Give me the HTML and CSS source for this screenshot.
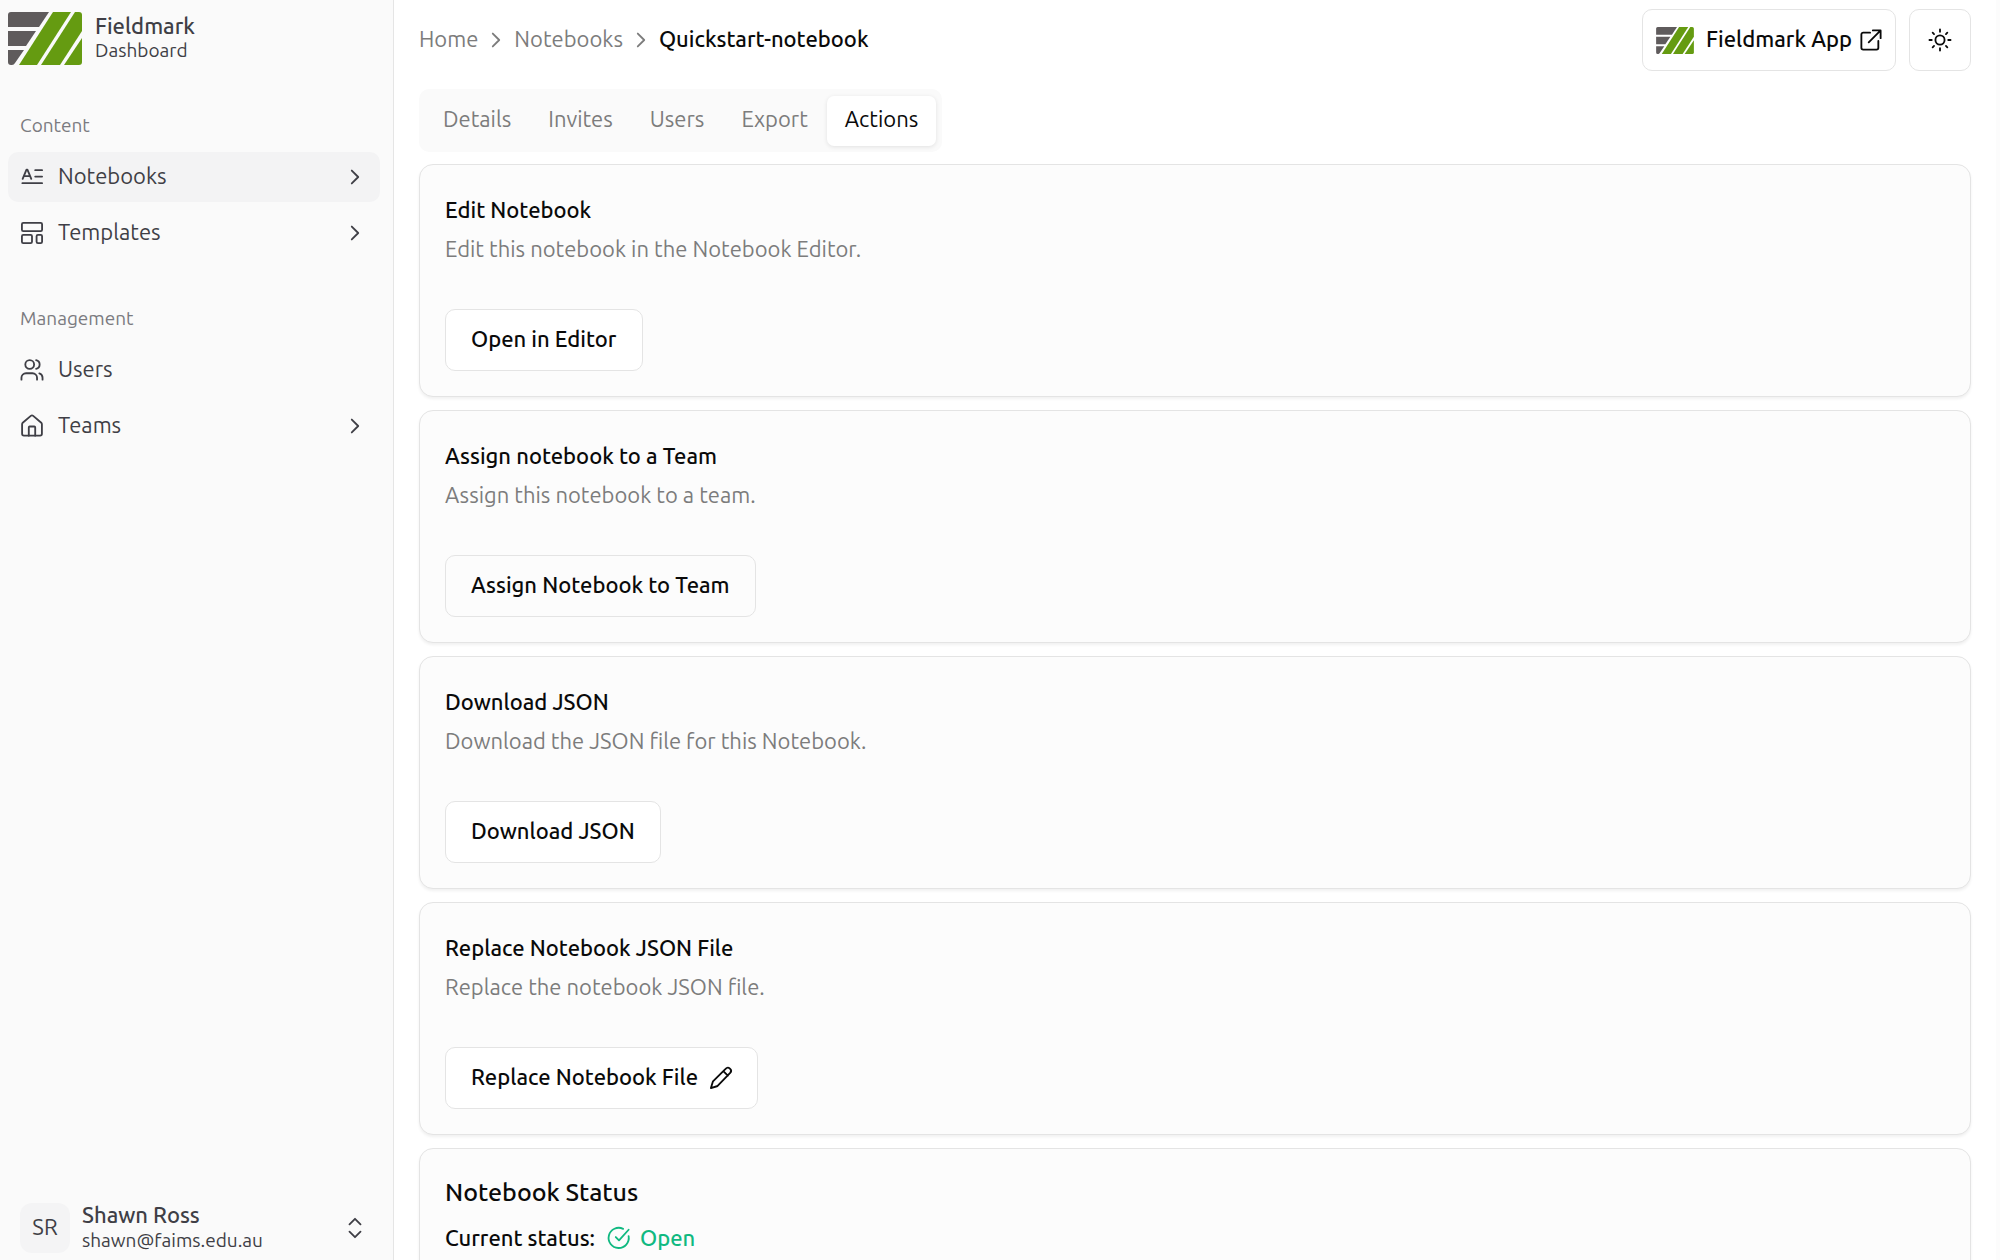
FILE: index.html
```html
<!DOCTYPE html>
<html lang="en">
<head>
<meta charset="utf-8">
<title>Quickstart-notebook - Fieldmark Dashboard</title>
<meta name="viewport" content="width=device-width, initial-scale=1">
<link rel="stylesheet" href="styles.css">
</head>
<body>
<svg class="defs" aria-hidden="true">
  <symbol id="logo" viewBox="0 0 74 53">
    <path fill="#5f5b5c" d="M3 0h38l-10 15H0V3a3 3 0 0 1 3-3z"/>
    <path fill="#5f5b5c" d="M0 19h28l-10 15H0z"/>
    <path fill="#5f5b5c" d="M0 38h16L7 51q-1 2-3 2H3a3 3 0 0 1-3-3z"/>
    <path fill="#659b11" d="M45 0h18L29 53H11z"/>
    <path fill="#659b11" d="M67 0h4a3 3 0 0 1 3 3v16L52 53H33z"/>
    <path fill="#659b11" d="M74 26v24a3 3 0 0 1-3 3H56z"/>
  </symbol>
  <symbol id="chevron" viewBox="0 0 24 24"><path d="m8.500 19 7-7-7-7"/></symbol>
</svg>
<div class="app">
  <aside class="sidebar">
    <a class="brand" href="#">
      <svg class="brand-logo" aria-hidden="true"><use href="#logo"/></svg>
      <span class="stack"><strong class="name">Fieldmark</strong><span class="sub">Dashboard</span></span>
    </a>
    <nav class="group" aria-labelledby="content-label">
      <h2 class="group-label" id="content-label">Content</h2>
      <a class="nav-item active" href="#">
        <svg class="icon" viewBox="0 0 24 24" aria-hidden="true"><path d="M15.500 4.500H23M15.500 11.500H23M1.500 18.700H23M1.800 14 6 4h1l4.200 10M3.500 11h6"/></svg>
        <span class="nav-text">Notebooks</span>
        <svg class="icon" aria-hidden="true"><use href="#chevron"/></svg>
      </a>
      <a class="nav-item" href="#">
        <svg class="icon" viewBox="0 0 24 24" aria-hidden="true"><rect width="22" height="9" x="1" y="1" rx="1.500"/><rect width="11" height="9" x="1" y="14" rx="1.500"/><rect width="6" height="9" x="17" y="14" rx="1.500"/></svg>
        <span class="nav-text">Templates</span>
        <svg class="icon" aria-hidden="true"><use href="#chevron"/></svg>
      </a>
    </nav>
    <nav class="group" aria-labelledby="management-label">
      <h2 class="group-label" id="management-label">Management</h2>
      <a class="nav-item" href="#">
        <svg class="icon" viewBox="0 0 24 24" aria-hidden="true"><path d="M17.500 22.500v-2a5 5 0 0 0-5-5H5.500a5 5 0 0 0-5 5v2"/><circle cx="9.500" cy="6" r="4.800"/><path d="M23.500 22.500v-2a5 5 0 0 0-3.500-4.800M16.500 1.300a4.800 4.800 0 0 1 0 9.400"/></svg>
        <span class="nav-text">Users</span>
      </a>
      <a class="nav-item" href="#">
        <svg class="icon" viewBox="0 0 24 24" aria-hidden="true"><path d="M15.500 22.500v-9a1 1 0 0 0-1-1h-5a1 1 0 0 0-1 1v9"/><path d="M1.200 10a2 2 0 0 1 .7-1.500l8.800-7.500a2 2 0 0 1 2.600 0l8.800 7.500a2 2 0 0 1 .7 1.500v10.500a2 2 0 0 1-2 2H3.200a2 2 0 0 1-2-2z"/></svg>
        <span class="nav-text">Teams</span>
        <svg class="icon" aria-hidden="true"><use href="#chevron"/></svg>
      </a>
    </nav>
    <button class="account" type="button">
      <span class="avatar">SR</span>
      <span class="stack account-text"><strong class="name">Shawn Ross</strong><span class="sub">shawn@faims.edu.au</span></span>
      <svg class="icon" viewBox="0 0 24 24" aria-hidden="true"><path d="m6 16 6 6 6-6M6 8l6-6 6 6"/></svg>
    </button>
  </aside>
  <main class="main">
    <header class="topbar">
      <nav class="crumbs" aria-label="Breadcrumb">
        <a class="crumb" href="#">Home</a>
        <svg class="icon" aria-hidden="true"><use href="#chevron"/></svg>
        <a class="crumb" href="#">Notebooks</a>
        <svg class="icon" aria-hidden="true"><use href="#chevron"/></svg>
        <span class="crumb current" aria-current="page">Quickstart-notebook</span>
      </nav>
      <a class="btn app-link" href="#">
        <svg class="app-logo" aria-hidden="true"><use href="#logo"/></svg>
        <span class="btn-text">Fieldmark App</span>
        <svg class="icon" viewBox="0 0 24 24" aria-hidden="true"><path d="M14 1.500h8.500V10M9.500 14.500l13-13M20 13v7.500a2 2 0 0 1-2 2H3.500a2 2 0 0 1-2-2V6a2 2 0 0 1 2-2H11"/></svg>
      </a>
      <button class="btn theme" type="button" aria-label="Toggle theme">
        <svg class="icon" viewBox="0 0 24 24" aria-hidden="true"><circle cx="12" cy="12" r="5"/><path d="M12 .5v2.500M12 21v2.500M.5 12H3M21 12h2.500M4 4l1.500 1.500M18.500 18.500 20 20M4 20l1.500-1.500M18.500 5.500 20 4"/></svg>
      </button>
    </header>
    <div class="tabs" role="tablist">
      <button class="tab" type="button" role="tab">Details</button>
      <button class="tab" type="button" role="tab">Invites</button>
      <button class="tab" type="button" role="tab">Users</button>
      <button class="tab" type="button" role="tab">Export</button>
      <button class="tab selected" type="button" role="tab" aria-selected="true">Actions</button>
    </div>
    <div class="cards">
      <section class="card">
        <h3 class="card-title">Edit Notebook</h3>
        <p class="card-desc">Edit this notebook in the Notebook Editor.</p>
        <button class="btn" type="button"><span class="btn-text">Open in Editor</span></button>
      </section>
      <section class="card">
        <h3 class="card-title">Assign notebook to a Team</h3>
        <p class="card-desc">Assign this notebook to a team.</p>
        <button class="btn plain" type="button"><span class="btn-text">Assign Notebook to Team</span></button>
      </section>
      <section class="card">
        <h3 class="card-title">Download JSON</h3>
        <p class="card-desc">Download the JSON file for this Notebook.</p>
        <button class="btn" type="button"><span class="btn-text">Download JSON</span></button>
      </section>
      <section class="card">
        <h3 class="card-title">Replace Notebook JSON File</h3>
        <p class="card-desc">Replace the notebook JSON file.</p>
        <button class="btn" type="button">
          <span class="btn-text">Replace Notebook File</span>
          <svg class="icon" viewBox="0 0 24 24" aria-hidden="true"><path d="M22 6.500a3 3 0 0 0-5-4.500L3.500 15.500a2 2 0 0 0-.5.800L1 23l6.500-2a2 2 0 0 0 .8-.5zM14.500 4.500l5 5"/></svg>
        </button>
      </section>
      <section class="card">
        <h3 class="status-title">Notebook Status</h3>
        <p class="status">Current status:
          <span class="open"><svg class="icon" viewBox="0 0 24 24" aria-hidden="true"><path d="M22.500 10a11 11 0 1 1-6-8M8.500 11l3.500 3.500L22.500 3"/></svg>Open</span>
        </p>
      </section>
    </div>
  </main>
</div>
</body>
</html>
```

FILE: styles.css
```css
* { box-sizing: border-box; }
body {
  margin: 0;
  background: #fff;
  color: #0a0a0a;
  font: 400 22px/30px Ubuntu, "Noto Sans", "Open Sans", sans-serif;
}
h2, h3, p { margin: 0; font-weight: 400; }
a { color: inherit; text-decoration: none; }
button { font: inherit; color: inherit; cursor: pointer; }
.defs { position: absolute; width: 0; height: 0; }
.icon {
  width: 22px;
  height: 22px;
  flex: none;
  overflow: visible;
  fill: none;
  stroke: currentColor;
  stroke-width: 2;
  stroke-linecap: round;
  stroke-linejoin: round;
}

.app { display: flex; height: 100vh; overflow: hidden; }

/* Sidebar */
.sidebar {
  flex: none;
  width: 394px;
  display: flex;
  flex-direction: column;
  padding: 11px 13px 0 8px;
  background: #fafafa;
  border-right: 1px solid #e5e5e5;
  color: #3f3f46;
}
.brand { display: flex; align-items: center; gap: 13px; height: 54px; }
.brand-logo { width: 74px; height: 53px; }
.stack { display: flex; flex-direction: column; text-align: left; }
.name { font-weight: 500; line-height: 25px; white-space: nowrap; }
.sub { font-size: 19px; line-height: 25px; }
.group { display: flex; flex-direction: column; gap: 6px; margin-top: 40px; }
.group-label { padding: 0 12px; font-size: 19px; line-height: 41px; color: #7b7b80; }
.nav-item {
  display: flex;
  align-items: center;
  gap: 15px;
  height: 50px;
  padding: 0 14px 0 13px;
  border-radius: 10px;
}
.nav-item.active { background: #f3f3f4; }
.nav-text { flex: 1; }
.nav-text, .btn-text, .crumb { padding-bottom: 2px; }
.account {
  display: flex;
  align-items: center;
  gap: 12px;
  margin-top: auto;
  padding: 6px 14px 7px 12px;
  border: 0;
  background: none;
}
.account-text { flex: 1; gap: 1px; }
.avatar {
  width: 50px;
  height: 50px;
  border-radius: 12px;
  background: #f4f4f5;
  line-height: 48px;
  text-align: center;
}

/* Main column */
.main {
  flex: 1;
  min-width: 0;
  overflow: hidden;
  padding: 9px 25px 0 25px;
  border-right: 4px solid #fcfcfc;
}
.topbar { display: flex; align-items: center; gap: 13px; }
.crumbs { display: flex; flex: 1; align-items: center; gap: 7px; color: #7c7c7c; }
.current { color: #0a0a0a; font-weight: 500; }
.btn {
  display: inline-flex;
  align-items: center;
  gap: 12px;
  height: 62px;
  padding: 0 25px;
  border: 1px solid #e4e4e4;
  border-radius: 10px;
  background: #fff;
  font-weight: 500;
}
.btn.plain { background: #fcfcfc; }
.app-link { padding: 0 13px; gap: 8px; }
.app-logo { width: 38px; height: 27px; margin-right: 4px; }
.theme { width: 62px; padding: 0; justify-content: center; }

.tabs {
  display: flex;
  gap: 1px;
  width: fit-content;
  margin-top: 18px;
  padding: 7px 6px 6px;
  border-radius: 10px;
  background: #fafafa;
  color: #7c7c7c;
}
.tab {
  height: 50px;
  padding: 0 18px 4px;
  border: 0;
  border-radius: 7px;
  background: none;
}
.tab.selected {
  background: #fff;
  color: #0a0a0a;
  box-shadow: 0 1px 4px rgb(0 0 0 / 10%);
}

.cards { display: flex; flex-direction: column; gap: 13px; margin-top: 12px; }
.card {
  padding: 25px;
  border: 1px solid #e4e4e4;
  border-radius: 14px;
  background: #fcfcfc;
  box-shadow: 0 2px 3px rgb(0 0 0 / 6%);
}
.card-title { font-size: 22px; font-weight: 500; line-height: 39px; }
.card-desc { margin-bottom: 40px; line-height: 40px; color: #7c7c7c; }
.status-title { font-size: 25px; font-weight: 500; line-height: 36px; }
.status { display: flex; align-items: center; gap: 13px; margin-top: 13px; font-weight: 500; }
.open { display: inline-flex; align-items: center; gap: 10px; color: #10b981; }
```
